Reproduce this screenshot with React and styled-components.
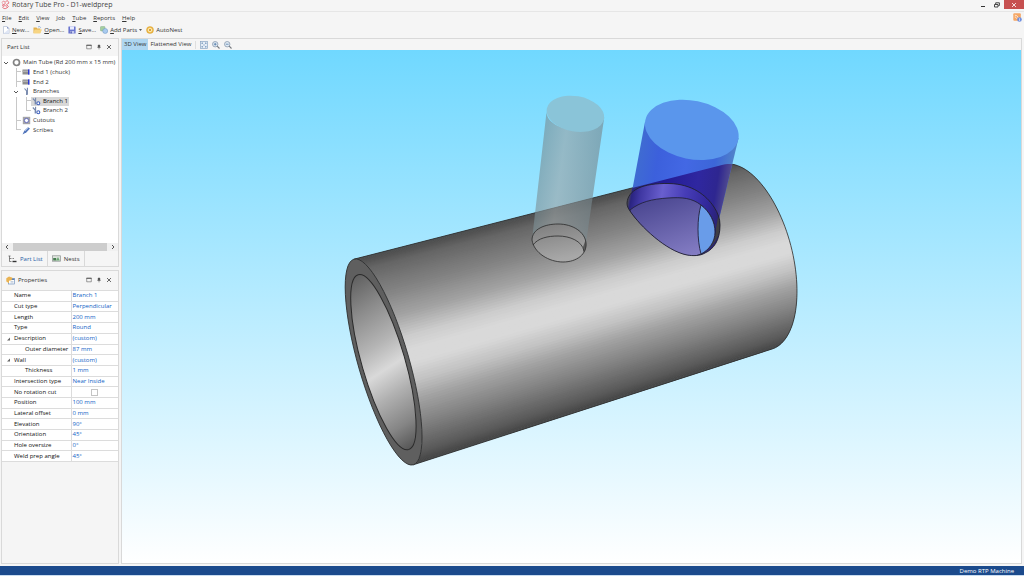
import React from 'react'
import styled, { createGlobalStyle, css } from 'styled-components'

const GlobalStyle = createGlobalStyle`
  * {
    box-sizing: border-box;
  }
  body {
    margin: 0;
    background: #f5f5f5;
    font-family: "Open Sans", "Noto Sans", sans-serif;
    font-size: 6px;
    color: #333;
  }
  button {
    font: inherit;
    color: inherit;
    background: none;
    border: 0;
    padding: 0;
    cursor: pointer;
  }
  svg {
    display: block;
    flex: none;
  }
`

const Page = styled.div`
  min-height: 100vh;
  display: flex;
  flex-direction: column;
`

const TitleBar = styled.header`
  height: 12px;
  padding-left: 1px;
  display: flex;
  align-items: flex-start;
  border-bottom: 1px solid #e6e6e6;
`

const Title = styled.h1`
  margin: 0 auto 0 2px;
  font-size: 7px;
  line-height: 10px;
  font-weight: 400;
  color: #444;
`

const WindowButton = styled.button`
  width: ${props => props.$close ? "20px" : "14px"};
  height: 9px;
  display: flex;
  align-items: center;
  justify-content: center;
  background: ${props => props.$close ? "#c75050" : "none"};
  color: ${props => props.$close ? "white" : "#333"};
`

const MenuBar = styled.nav`
  height: 11px;
  padding: 0 2px;
  display: flex;
  align-items: center;
  gap: 7px;
`

const MenuItem = styled.button`
  line-height: 10px;

  &::first-letter {
    text-decoration: underline;
  }
`

const Notice = styled.button`
  margin-left: auto;
`

const ToolBar = styled.div`
  height: 14px;
  margin-bottom: 1px;
  padding-left: 2px;
  display: flex;
  align-items: center;
  gap: 4px;
`

const ToolButton = styled.button`
  display: flex;
  align-items: center;
  gap: 2px;
  line-height: 12px;

  u {
    text-decoration-thickness: 1px;
  }
`

const Workspace = styled.main`
  flex: 1;
  padding: 0 2px 0 1px;
  display: grid;
  grid-template-columns: 118px 1fr;
  gap: 2px;
`

const Sidebar = styled.aside`
  display: flex;
  flex-direction: column;
  gap: 3px;
`

const Panel = styled.section`
  flex: ${props => props.$grow} 0 0;
  min-width: 0;
  display: flex;
  flex-direction: column;
  border: 1px solid #d9d9d9;
`

const PanelHead = styled.div`
  height: ${props => props.$tall ? "19px" : "17px"};
  padding: 0 5px 1px 4px;
  display: flex;
  align-items: center;
  gap: 2px;
`

const PanelTitle = styled.h2`
  margin: 0 auto 0 1px;
  font-size: 6px;
  font-weight: 400;
`

const PanelButton = styled.button`
  width: 8px;
  height: 8px;
  display: flex;
  align-items: center;
  justify-content: center;
  color: #444;
`

const TreeArea = styled.div`
  flex: 1;
  padding: 2px 1px 0;
  background: white;
`

const Tree = styled.ul`
  height: 77px;
  margin: 0;
  padding: 0;
  list-style: none;
  display: grid;
  grid-template-rows: repeat(8, 1fr);
`

const TreeRow = styled.li`
  display: flex;
  align-items: center;
  white-space: nowrap;
`

const Spacer = styled.span`
  width: 8px;
  flex: none;
`

const Toggle = styled.button`
  width: ${props => props.$nested ? "10px" : "8px"};
  padding-left: ${props => props.$nested ? "2px" : "0"};
  flex: none;
`

const Guide = styled.span`
  width: 10px;
  flex: none;
  align-self: stretch;
  display: grid;
  grid-template-columns: 6px 4px;
  grid-template-rows: 1fr 1fr;

  &::before {
    content: "";
    grid-row: ${props => props.$last ? "1" : "1 / 3"};
    border-right: 1px solid #c8c8c8;
  }
  &::after {
    content: "";
    grid-column: 2;
    grid-row: 1;
    border-bottom: ${props => props.$line ? "0" : "1px solid #c8c8c8"};
  }
`

const TreeEntry = styled.span`
  height: 9px;
  padding-right: 1px;
  display: flex;
  align-items: center;
  gap: 2px;
  line-height: 9px;
  ${props => props.$selected && css`
    background: #d8d8d8;
    color: #111;
  `}
`

const TreeIcon = styled.span`
  width: 10px;
  flex: none;
  display: flex;
  justify-content: center;
`

const ScrollBar = styled.div`
  height: 8px;
  padding: 0 2px;
  display: flex;
  align-items: center;
  gap: 3px;
  background: #f0f0f0;
`

const Thumb = styled.div`
  flex: 1;
  height: 8px;
  background: #cdcdcd;
`

const Tabs = styled.div`
  height: 15px;
  padding-left: 2px;
  display: flex;
`

const Tab = styled.button`
  padding: 0 4px;
  display: flex;
  align-items: center;
  gap: 3px;
  border-right: 1px solid #d9d9d9;
  color: ${props => props.$active ? "#1f5ca5" : "#333"};
`

const PropertyTable = styled.table`
  width: 100%;
  height: 172px;
  border-collapse: collapse;
  table-layout: fixed;
  background: white;
  color: #111;
`

const PropertyName = styled.th`
  width: 69px;
  padding: 0 0 0 ${props => props.$child ? "23px" : "4px"};
  text-align: left;
  font-weight: 400;
  line-height: 9px;
  border: 1px solid #dcdcdc;
  border-left: 0;
  white-space: nowrap;
`

const NameLine = styled.span`
  display: flex;
  align-items: center;
`

const PropertyValue = styled.td`
  padding: 0 0 0 1px;
  line-height: 9px;
  border: 1px solid #dcdcdc;
  border-right: 0;
  color: #1062c6;
  white-space: nowrap;
`

const Expander = styled.span`
  width: 8px;
  flex: none;
`

const Check = styled.input`
  appearance: none;
  display: block;
  width: 7px;
  height: 7px;
  margin: 0 0 0 18px;
  background: white;
  border: 1px solid #c4c4c4;

  &:checked {
    background: #1d6fcc;
  }
`

const ViewPanel = styled.section`
  min-width: 0;
  display: flex;
  flex-direction: column;
  border: 1px solid #d9d9d9;
`

const ViewBar = styled.div`
  height: 11px;
  display: flex;
  align-items: center;
`

const ViewTab = styled.button`
  height: 11px;
  padding: 0 2px;
  line-height: 11px;
  background: ${props => props.$active ? "#aed6f1" : "none"};
`

const ViewTools = styled.div`
  margin-left: 2px;
  padding-left: 4px;
  display: flex;
  gap: 4px;
  border-left: 1px solid #dedede;
`

const Canvas = styled.div`
  flex: 1;
  min-height: 0;
  display: flex;
  background: linear-gradient(#70d8ff, #ffffff);

  > svg {
    width: 100%;
    height: auto;
    flex: 1;
  }
`

const StatusBar = styled.footer`
  height: 10px;
  margin-top: 2px;
  padding-right: 10px;
  display: flex;
  align-items: center;
  justify-content: flex-end;
  background: #1b4a8c;
  border-bottom: 1px solid #c9dcf0;
  color: white;
`

/* ---------- icons ---------- */

const LogoIcon = () => (
  <svg width="9" height="10" viewBox="0 0 9 10" fill="none" stroke="#e8707c" strokeWidth="0.9">
    <path d="M1 2.5C2 .5 4 1 4.2 3S2 5 1 3.600M4.500 1.500 6.500.6 8 3 5.500 4.500M1 5.500C2.500 6.500 4 5 5.500 6S5 9.300 3 8.500 1.500 6.500 3 6.500M5.500 4.500 7.500 6.500 5.500 8.500" />
  </svg>
)

const NewIcon = () => (
  <svg width="8" height="8" viewBox="0 0 8 8">
    <path d="M1.500.5h3.500l2 2v5H1.500z" fill="#fff" stroke="#a5b3cf" strokeWidth=".6" />
    <path d="M5 .5v2h2z" fill="#7f92c5" />
    <path d="M1.500 7.500h5.500V3z" fill="#dfe6f5" />
  </svg>
)

const OpenIcon = () => (
  <svg width="9" height="8" viewBox="0 0 9 8">
    <path d="M.5 7V1.500h3l.8 1h3V7z" fill="#e2b04c" />
    <path d="M1.500 3.500H9L7.200 7.500H.4z" fill="#f7d583" />
    <path d="M5 1.200c1-1 2.300-.6 2.700.5" fill="none" stroke="#6c9ad6" strokeWidth=".7" />
  </svg>
)

const SaveIcon = () => (
  <svg width="8" height="8" viewBox="0 0 8 8">
    <rect x=".4" y=".4" width="7.200" height="7.200" rx=".4" fill="#6974cf" />
    <rect x="2" y=".4" width="4" height="3.200" fill="#e8ecff" />
    <rect x="2" y="5" width="4.200" height="2.600" fill="#c4caef" />
    <rect x="2.500" y="5.400" width="1.200" height="2" fill="#3d47a3" />
  </svg>
)

const PartsIcon = () => (
  <svg width="8" height="8" viewBox="0 0 8 8">
    <rect x=".4" y=".4" width="4.600" height="4.600" rx="1" fill="#a5cf9f" stroke="#6f9c78" strokeWidth=".4" />
    <circle cx="5.200" cy="5" r="2.500" fill="#a9cbee" stroke="#6b93c4" strokeWidth=".5" />
  </svg>
)

const NestIcon = () => (
  <svg width="8" height="8" viewBox="0 0 8 8">
    <circle cx="4" cy="4" r="3.500" fill="#eeb63f" stroke="#d19a2c" strokeWidth=".4" />
    <circle cx="4" cy="4" r="1.800" fill="none" stroke="#fff4cf" strokeWidth=".9" />
    <circle cx="4" cy="4" r=".7" fill="#b9852a" />
  </svg>
)

const NoticeIcon = () => (
  <svg width="9" height="9" viewBox="0 0 9 9">
    <rect x=".3" y=".3" width="7.500" height="7.500" rx="1" fill="#f6a765" />
    <path d="M1.800 2.200c2 0 3.500 1.500 3.500 3.500M1.800 4c1 0 1.700.8 1.700 1.700" fill="none" stroke="#fff" strokeWidth=".7" />
    <circle cx="6.500" cy="6.500" r="2.300" fill="#6f8fe0" />
    <path d="M6.500 5.200v.6M6.500 6.200v1.600" stroke="#fff" strokeWidth=".7" />
  </svg>
)

const FitIcon = () => (
  <svg width="8" height="8" viewBox="0 0 8 8" fill="none">
    <rect x=".5" y=".5" width="7" height="7" fill="#e6eef7" stroke="#8aa5c4" strokeWidth=".7" />
    <path d="M1.800 3V1.800H3M5 1.800h1.200V3M6.200 5v1.200H5M3 6.200H1.800V5M2 2l1.500 1.500M6 2 4.500 3.500M6 6 4.500 4.500M2 6l1.500-1.500" stroke="#5b80ad" strokeWidth=".5" />
  </svg>
)

const ZoomIcon = ({ plus }) => (
  <svg width="8" height="8" viewBox="0 0 8 8" fill="none">
    <circle cx="3.200" cy="3.200" r="2.700" fill="#e3edf6" stroke="#7a8ca3" strokeWidth=".7" />
    <path d={plus ? "M1.800 3.200h2.800M3.200 1.800v2.800" : "M1.800 3.200h2.800"} stroke="#3f6a9f" strokeWidth=".7" />
    <path d="M5.200 5.200 7.500 7.500" stroke="#76797e" strokeWidth="1.100" />
  </svg>
)

const MaxIcon = () => (
  <svg width="6" height="6" viewBox="0 0 6 6">
    <path d="M.7 1.200h4.600v3.600H.7z" fill="none" stroke="currentColor" strokeWidth=".5" />
    <path d="M.4 1.300h5.200" stroke="currentColor" strokeWidth=".8" />
  </svg>
)

const PinIcon = () => (
  <svg width="6" height="6" viewBox="0 0 6 6" stroke="currentColor" strokeWidth=".5">
    <path d="M2.200 1h1.600v2.200H2.200z" fill="currentColor" />
    <path d="M1.200 3.400h3.600M3 3.400v2" />
  </svg>
)

const CrossIcon = () => (
  <svg width="6" height="6" viewBox="0 0 6 6" stroke="currentColor" strokeWidth=".8">
    <path d="M1 1l4 4M5 1 1 5" />
  </svg>
)

const MinimizeIcon = () => (
  <svg width="6" height="6" viewBox="0 0 6 6">
    <rect x="1" y="4" width="4" height="1" fill="currentColor" />
  </svg>
)

const RestoreIcon = () => (
  <svg width="6" height="6" viewBox="0 0 6 6" fill="none" stroke="currentColor" strokeWidth=".9">
    <path d="M.5 2.500h3.500v2.500H.5zM1.700 2V.8h3.700v2.700H4.400" />
  </svg>
)

const ChevronIcon = ({ d }) => (
  <svg width="6" height="6" viewBox="0 0 6 6" fill="none" stroke="#444" strokeWidth=".9">
    <path d={d} />
  </svg>
)

const TubeIcon = () => (
  <svg width="9" height="9" viewBox="0 0 9 9">
    <circle cx="4.500" cy="4.500" r="3" fill="#fff" stroke="#838383" strokeWidth="1.700" />
  </svg>
)

const EndIcon = () => (
  <svg width="8" height="6" viewBox="0 0 8 6">
    <rect x=".5" y=".5" width="5.500" height="5" fill="#8f8f8f" />
    <rect x=".5" y="1.600" width="5.500" height="1.400" fill="#b0b0b0" />
    <rect x="6" y=".3" width="1.500" height="5.400" fill="#2b38d4" />
  </svg>
)

const BranchIcon = ({ dot }) => (
  <svg width="9" height="9" viewBox="0 0 9 9">
    <path d={dot ? "M.8 1.500 3.200 4V7.500M3.600.8v6.500" : "M2.500 1.500 4.600 4V8M5.400.8v7"} fill="none" stroke="#7688ac" strokeWidth="1.100" />
    {dot && <circle cx="6.300" cy="6.200" r="1.500" fill="#fff" stroke="#4062bd" strokeWidth="1.100" />}
  </svg>
)

const CutoutIcon = () => (
  <svg width="9" height="9" viewBox="0 0 9 9">
    <rect x=".8" y=".8" width="7.400" height="7.400" fill="#a4a4a8" />
    <circle cx="4.500" cy="4.500" r="2.100" fill="#fff" stroke="#5f67bd" strokeWidth=".9" />
  </svg>
)

const ScribeIcon = () => (
  <svg width="9" height="9" viewBox="0 0 9 9">
    <path d="M.5 8.500 2.300 4.800 6 1.200 8 2.500 4.500 6.300z" fill="#5276bb" />
    <path d="M3 5 6.500 1.600" stroke="#b5c8ea" strokeWidth=".9" />
  </svg>
)

const PartTabIcon = () => (
  <svg width="9" height="8" viewBox="0 0 9 8" fill="none" stroke="#555" strokeWidth=".7">
    <path d="M.5 1h2M1.500 1v5.500M1.500 3.500h2M1.500 6.500h2M4.500 3.500h1.500" />
    <path d="M4.500 6.500h4" stroke="#333" strokeWidth="1.400" />
  </svg>
)

const NestsTabIcon = () => (
  <svg width="9" height="7" viewBox="0 0 9 7">
    <rect x=".5" y=".8" width="8" height="5.400" fill="#dfe5df" stroke="#8b9190" strokeWidth=".7" />
    <rect x="1.200" y="3" width="3" height="2.500" fill="#477d50" />
    <path d="M4 5.500 6 2l1.800 3.500z" fill="#6ba774" />
  </svg>
)

const PropertiesIcon = () => (
  <svg width="9" height="9" viewBox="0 0 9 9">
    <rect x="2.500" y="2.500" width="6" height="5.500" fill="#fff" stroke="#5e82b5" strokeWidth=".6" />
    <rect x="2.500" y="2.500" width="6" height="1.500" fill="#5e82b5" />
    <path d="M4.500 5.500h3M4.500 6.800h3" stroke="#8aa0bf" strokeWidth=".5" />
    <path d="M.3 2.200 3 .4 6.500 1.800 5.500 4.200 3 4.800v2.500L.3 5.600z" fill="#e9b353" />
  </svg>
)

/* ---------- 3D model ---------- */

const front = { cx: 383.6, cy: 362, rx: 25.4, ry: 107, tilt: 16.1 }
const back = { cx: 747, cy: 257, rx: 45.3, ry: 95.4, tilt: 14.6 }

const pointOn = (e, degrees) => {
  const a = degrees * Math.PI / 180
  const t = e.tilt * Math.PI / 180
  const along = e.ry * Math.sin(a)
  const across = e.rx * Math.cos(a)
  const x = e.cx + along * Math.sin(t) + across * Math.cos(t)
  const y = e.cy + along * Math.cos(t) - across * Math.sin(t)
  return `${x.toFixed(2)},${y.toFixed(2)}`
}

// grey level by height on the tube, from the top edge (-1) to the bottom one (1)
const shades = [
  [-1, 74], [-0.88, 102], [-0.6, 134], [-0.38, 163], [-0.17, 205], [-0.04, 217],
  [0.08, 217], [0.25, 194], [0.42, 162], [0.65, 128], [0.9, 90], [1, 66],
]

const shadeAt = w => {
  const i = Math.max(1, shades.findIndex(([stop]) => stop >= w))
  const [w0, s0] = shades[i - 1]
  const [w1, s1] = shades[i]
  return Math.round(s0 + (s1 - s0) * (w - w0) / (w1 - w0))
}

const STEP = 1.5
// every strip runs one step further than its own, so that no seam shows
const strips = Array.from({ length: 180 / STEP }, (_, i) => {
  const from = -90 + i * STEP
  const to = Math.min(from + STEP * 2, 90)
  const level = shadeAt(Math.sin((from + STEP / 2) * Math.PI / 180))
  return {
    points: [pointOn(front, from), pointOn(back, from), pointOn(back, to), pointOn(front, to)].join(' '),
    fill: `rgb(${level}, ${level}, ${level})`,
  }
})

const outline = () => {
  const arc = []
  for (let a = -90; a <= 90; a += 3) arc.push(pointOn(back, a))
  return `${pointOn(front, -90)} ${arc.join(' ')} ${pointOn(front, 90)}`
}

const smallHole = "M532 240C532 229 545 224 558 224C573 224 585 232 586 243C587 254 577 262 563 262C549 262 534 253 532 240Z"
const largeHole = "M627 203C628 190 642 183 669 183.500C692 184 706 195 714 207C718 213 720 219 720 225C720 240 714 249 705 253C700 256 693 256 687 255C666 251 640 226 630 211C628 208 627 206 627 203Z"

const TubeModel = () => (
  <svg viewBox="122 50 899 513" role="img" aria-label="Main tube with two branches">
    <defs>
      <linearGradient id="bore" gradientUnits="userSpaceOnUse" x1="358" y1="275" x2="410" y2="449">
        <stop offset="0" stopColor="#5c5c5c" />
        <stop offset=".2" stopColor="#8a8a8a" />
        <stop offset=".4" stopColor="#b4b4b4" />
        <stop offset=".54" stopColor="#d9d9d9" />
        <stop offset=".68" stopColor="#b0b0b0" />
        <stop offset=".85" stopColor="#858585" />
        <stop offset="1" stopColor="#505050" />
      </linearGradient>
      <linearGradient id="glass" gradientUnits="userSpaceOnUse" x1="540" y1="170" x2="598" y2="178">
        <stop offset="0" stopColor="#7a8f95" stopOpacity=".62" />
        <stop offset=".35" stopColor="#9aa2a4" stopOpacity=".62" />
        <stop offset="1" stopColor="#76868c" stopOpacity=".62" />
      </linearGradient>
      <linearGradient id="blueSide" gradientUnits="userSpaceOnUse" x1="638" y1="160" x2="732" y2="176">
        <stop offset="0" stopColor="#3f6bd2" />
        <stop offset=".2" stopColor="#3c60dc" />
        <stop offset=".5" stopColor="#4368e4" />
        <stop offset=".8" stopColor="#3c66d8" />
        <stop offset="1" stopColor="#5284c9" />
      </linearGradient>
      <linearGradient id="blueShade" gradientUnits="userSpaceOnUse" x1="632" y1="190" x2="728" y2="206">
        <stop offset="0" stopColor="#2b2779" />
        <stop offset=".3" stopColor="#231b94" />
        <stop offset=".65" stopColor="#2f27a0" />
        <stop offset=".85" stopColor="#2e2690" />
        <stop offset="1" stopColor="#5a5590" />
      </linearGradient>
      <linearGradient id="rim" gradientUnits="userSpaceOnUse" x1="628" y1="200" x2="720" y2="215">
        <stop offset="0" stopColor="#4a4a52" />
        <stop offset=".03" stopColor="#2a2480" />
        <stop offset=".12" stopColor="#3f37a2" />
        <stop offset=".35" stopColor="#695fce" />
        <stop offset=".6" stopColor="#463cb6" />
        <stop offset=".85" stopColor="#31289a" />
        <stop offset="1" stopColor="#2a2270" />
      </linearGradient>
      <linearGradient id="inside" gradientUnits="userSpaceOnUse" x1="664" y1="198" x2="684" y2="256">
        <stop offset="0" stopColor="#4e4a94" />
        <stop offset="1" stopColor="#827bc2" />
      </linearGradient>
      <linearGradient id="smallInside" x1="0" y1="0" x2=".3" y2="1">
        <stop offset="0" stopColor="#7c7c7c" />
        <stop offset="1" stopColor="#a8a8a8" />
      </linearGradient>
      <clipPath id="body">
        <polygon points={outline()} />
      </clipPath>
      <clipPath id="largeClip">
        <path d={largeHole} />
      </clipPath>
    </defs>

    {/* main tube */}
    {strips.map(strip => <polygon key={strip.points} points={strip.points} fill={strip.fill} />)}
    <polyline points={outline()} fill="none" stroke="#2b2b2b" strokeWidth=".8" />
    <ellipse cx="383.6" cy="362" rx="25.400" ry="107" fill="#5f5f5f" stroke="#2b2b2b" strokeWidth=".8" transform="rotate(-16.1 383.6 362)" />
    <ellipse cx="383.4" cy="362.2" rx="21.600" ry="91" fill="url(#bore)" stroke="#2b2b2b" strokeWidth="1" transform="rotate(-16.1 383.4 362.2)" />

    {/* branch 2 */}
    <path d={smallHole} fill="url(#smallInside)" />
    <path d="M546.500 112L532 240C532 229 545 224 558 224C573 224 585 232 586 243L604.300 117C601 137 547 133 546.500 112Z" fill="url(#glass)" />
    <ellipse cx="575.4" cy="113.8" rx="29.100" ry="17.700" fill="#8ac4d8" transform="rotate(10 575.4 113.8)" />
    <path d={smallHole} fill="none" stroke="#2b2b2b" strokeWidth=".8" />
    <path d="M533 245C538 238 548 236 558 236C570 236 582 241 584 251" fill="none" stroke="#2b2b2b" strokeWidth=".8" />
    <path d="M585.600 240C587 246 586 250 583.500 253L583 247Z" fill="#3a3a3a" opacity=".7" />

    {/* branch 1 */}
    <path d="M645 122L630 202L719 219L738.600 138L692 130Z" fill="url(#blueSide)" />
    <path d="M645 122L629 205L719 219L738.600 138L692 130Z" fill="url(#blueShade)" clipPath="url(#body)" />
    <ellipse cx="691.8" cy="129.9" rx="47.500" ry="29.200" fill="#5a96ec" transform="rotate(11.8 691.8 129.9)" />
    <path d={largeHole} fill="url(#rim)" />
    <g clipPath="url(#largeClip)">
      <path d="M630 210C640 202 652 199 668 198C682 197 692 198 701 205C710 212 715 222 715 232C715 242 709 250 701 254L690 258L660 250L630 212Z" fill="url(#inside)" stroke="#22223c" strokeWidth=".9" />
      <path d="M719 212C723 222 722 240 703 254C711 247 716 240 716 228Z" fill="#3f3e44" />
    </g>
    <path d="M701 205C697 218 697 240 701 254C709 250 715 242 715 232C715 222 710 212 701 205Z" fill="#699ce9" stroke="#22223c" strokeWidth=".9" />
    <path d={largeHole} fill="none" stroke="#20202e" strokeWidth=".9" />
  </svg>
)

/* ---------- data ---------- */

const menus = ["File", "Edit", "View", "Job", "Tube", "Reports", "Help"]

const tree = [
  { label: "Main Tube (Rd 200 mm x 15 mm)", depth: 0, icon: <TubeIcon /> },
  { label: "End 1 (chuck)", depth: 1, icon: <EndIcon /> },
  { label: "End 2", depth: 1, icon: <EndIcon /> },
  { label: "Branches", depth: 1, icon: <BranchIcon />, open: true },
  { label: "Branch 1", depth: 2, icon: <BranchIcon dot />, selected: true },
  { label: "Branch 2", depth: 2, icon: <BranchIcon dot />, last: true },
  { label: "Cutouts", depth: 1, icon: <CutoutIcon /> },
  { label: "Scribes", depth: 1, icon: <ScribeIcon />, last: true },
]

const properties = [
  { name: "Name", value: "Branch 1" },
  { name: "Cut type", value: "Perpendicular" },
  { name: "Length", value: "200 mm" },
  { name: "Type", value: "Round" },
  { name: "Description", value: "(custom)", open: true },
  { name: "Outer diameter", value: "87 mm", child: true },
  { name: "Wall", value: "(custom)", open: true },
  { name: "Thickness", value: "1 mm", child: true },
  { name: "Intersection type", value: "Near Inside" },
  { name: "No rotation cut", check: true },
  { name: "Position", value: "100 mm" },
  { name: "Lateral offset", value: "0 mm" },
  { name: "Elevation", value: "90°" },
  { name: "Orientation", value: "45°" },
  { name: "Hole oversize", value: "0°" },
  { name: "Weld prep angle", value: "45°" },
]

const PanelButtons = () => (
  <>
    <PanelButton aria-label="Maximize"><MaxIcon /></PanelButton>
    <PanelButton aria-label="Pin"><PinIcon /></PanelButton>
    <PanelButton aria-label="Close"><CrossIcon /></PanelButton>
  </>
)

const TreeItem = ({ item }) => (
  <TreeRow>
    {item.depth === 0 ? (
      <Toggle aria-label="Collapse"><ChevronIcon d="M1 2l2 2 2-2" /></Toggle>
    ) : <Spacer />}
    {item.depth === 1 && (item.open ? (
      <Toggle $nested aria-label="Collapse"><ChevronIcon d="M1 2l2 2 2-2" /></Toggle>
    ) : <Guide $last={item.last} />)}
    {item.depth === 2 && (
      <>
        <Guide $line />
        <Guide $last={item.last} />
      </>
    )}
    <TreeEntry $selected={item.selected}>
      <TreeIcon>{item.icon}</TreeIcon>
      {item.label}
    </TreeEntry>
  </TreeRow>
)

const PropertyRow = ({ row }) => (
  <tr>
    <PropertyName scope="row" $child={row.child}>
      <NameLine>
        {!row.child && (
          <Expander>
            {row.open && (
              <svg width="6" height="6" viewBox="0 0 6 6"><path d="M4 1.500V4.500H1z" fill="#666" /></svg>
            )}
          </Expander>
        )}
        {row.check ? <label htmlFor="no-rotation">{row.name}</label> : row.name}
      </NameLine>
    </PropertyName>
    <PropertyValue>
      {row.check ? <Check id="no-rotation" type="checkbox" /> : row.value}
    </PropertyValue>
  </tr>
)

const App = () => {
  return (
    <Page>
      <GlobalStyle />
      <TitleBar>
        <LogoIcon />
        <Title>Rotary Tube Pro - D1-weldprep</Title>
        <WindowButton aria-label="Minimize"><MinimizeIcon /></WindowButton>
        <WindowButton aria-label="Restore"><RestoreIcon /></WindowButton>
        <WindowButton $close aria-label="Close"><CrossIcon /></WindowButton>
      </TitleBar>
      <MenuBar>
        {menus.map(menu => <MenuItem key={menu}>{menu}</MenuItem>)}
        <Notice aria-label="Notifications"><NoticeIcon /></Notice>
      </MenuBar>
      <ToolBar>
        <ToolButton><NewIcon /><span><u>N</u>ew...</span></ToolButton>
        <ToolButton><OpenIcon /><span><u>O</u>pen...</span></ToolButton>
        <ToolButton><SaveIcon /><span><u>S</u>ave...</span></ToolButton>
        <ToolButton>
          <PartsIcon />
          <span><u>A</u>dd Parts</span>
          <svg width="3" height="2" viewBox="0 0 3 2"><path d="M0 0h3L1.500 2z" fill="#555" /></svg>
        </ToolButton>
        <ToolButton><NestIcon /><span>AutoNest</span></ToolButton>
      </ToolBar>
      <Workspace>
        <Sidebar>
          <Panel $grow={7}>
            <PanelHead>
              <PanelTitle>Part List</PanelTitle>
              <PanelButtons />
            </PanelHead>
            <TreeArea>
              <Tree>
                {tree.map(item => <TreeItem key={item.label} item={item} />)}
              </Tree>
            </TreeArea>
            <ScrollBar>
              <button aria-label="Scroll left"><ChevronIcon d="M4 1 2 3l2 2" /></button>
              <Thumb />
              <button aria-label="Scroll right"><ChevronIcon d="M2 1l2 2-2 2" /></button>
            </ScrollBar>
            <Tabs>
              <Tab $active><PartTabIcon />Part List</Tab>
              <Tab><NestsTabIcon />Nests</Tab>
            </Tabs>
          </Panel>
          <Panel $grow={9}>
            <PanelHead $tall>
              <PropertiesIcon />
              <PanelTitle>Properties</PanelTitle>
              <PanelButtons />
            </PanelHead>
            <PropertyTable>
              <tbody>
                {properties.map(row => <PropertyRow key={row.name} row={row} />)}
              </tbody>
            </PropertyTable>
          </Panel>
        </Sidebar>
        <ViewPanel>
          <ViewBar>
            <ViewTab $active>3D View</ViewTab>
            <ViewTab>Flattened View</ViewTab>
            <ViewTools>
              <button aria-label="Zoom to fit"><FitIcon /></button>
              <button aria-label="Zoom in"><ZoomIcon plus /></button>
              <button aria-label="Zoom out"><ZoomIcon /></button>
            </ViewTools>
          </ViewBar>
          <Canvas>
            <TubeModel />
          </Canvas>
        </ViewPanel>
      </Workspace>
      <StatusBar>Demo RTP Machine</StatusBar>
    </Page>
  )
}

export default App
